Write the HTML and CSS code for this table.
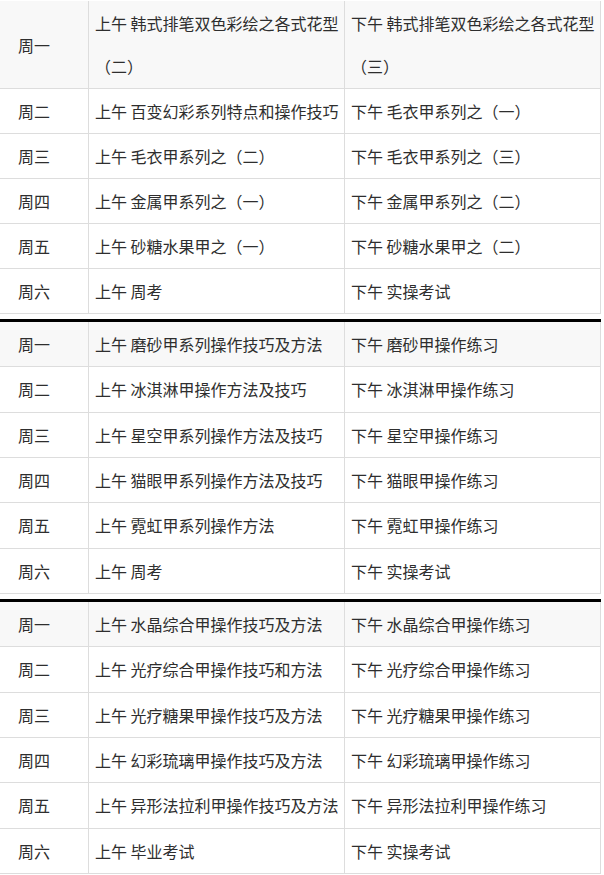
FILE: index.html
```html
<!DOCTYPE html>
<html lang="zh-CN">
<head>
<meta charset="utf-8">
<title>课程安排</title>
<link rel="stylesheet" href="styles.css">
</head>
<body>
<div class="schedule">
  <table class="week">
    <colgroup><col class="c-day"><col class="c-am"><col class="c-pm"></colgroup>
    <tbody>
      <tr class="head"><td class="day">周一</td><td>上午 韩式排笔双色彩绘之各式花型（二）</td><td>下午 韩式排笔双色彩绘之各式花型（三）</td></tr>
      <tr><td class="day">周二</td><td>上午 百变幻彩系列特点和操作技巧</td><td>下午 毛衣甲系列之（一）</td></tr>
      <tr><td class="day">周三</td><td>上午 毛衣甲系列之（二）</td><td>下午 毛衣甲系列之（三）</td></tr>
      <tr><td class="day">周四</td><td>上午 金属甲系列之（一）</td><td>下午 金属甲系列之（二）</td></tr>
      <tr><td class="day">周五</td><td>上午 砂糖水果甲之（一）</td><td>下午 砂糖水果甲之（二）</td></tr>
      <tr><td class="day">周六</td><td>上午 周考</td><td>下午 实操考试</td></tr>
    </tbody>
  </table>
  <table class="week week--ruled">
    <colgroup><col class="c-day"><col class="c-am"><col class="c-pm"></colgroup>
    <tbody>
      <tr class="head"><td class="day">周一</td><td>上午 磨砂甲系列操作技巧及方法</td><td>下午 磨砂甲操作练习</td></tr>
      <tr><td class="day">周二</td><td>上午 冰淇淋甲操作方法及技巧</td><td>下午 冰淇淋甲操作练习</td></tr>
      <tr><td class="day">周三</td><td>上午 星空甲系列操作方法及技巧</td><td>下午 星空甲操作练习</td></tr>
      <tr><td class="day">周四</td><td>上午 猫眼甲系列操作方法及技巧</td><td>下午 猫眼甲操作练习</td></tr>
      <tr><td class="day">周五</td><td>上午 霓虹甲系列操作方法</td><td>下午 霓虹甲操作练习</td></tr>
      <tr><td class="day">周六</td><td>上午 周考</td><td>下午 实操考试</td></tr>
    </tbody>
  </table>
  <table class="week week--ruled">
    <colgroup><col class="c-day"><col class="c-am"><col class="c-pm"></colgroup>
    <tbody>
      <tr class="head"><td class="day">周一</td><td>上午 水晶综合甲操作技巧及方法</td><td>下午 水晶综合甲操作练习</td></tr>
      <tr><td class="day">周二</td><td>上午 光疗综合甲操作技巧和方法</td><td>下午 光疗综合甲操作练习</td></tr>
      <tr><td class="day">周三</td><td>上午 光疗糖果甲操作技巧及方法</td><td>下午 光疗糖果甲操作练习</td></tr>
      <tr><td class="day">周四</td><td>上午 幻彩琉璃甲操作技巧及方法</td><td>下午 幻彩琉璃甲操作练习</td></tr>
      <tr><td class="day">周五</td><td>上午 异形法拉利甲操作技巧及方法</td><td>下午 异形法拉利甲操作练习</td></tr>
      <tr><td class="day">周六</td><td>上午 毕业考试</td><td>下午 实操考试</td></tr>
    </tbody>
  </table>
</div>
</body>
</html>
```

FILE: styles.css
```css
html, body {
  margin: 0;
  padding: 0;
  background: #ffffff;
}

body {
  font-family: "Noto Sans CJK SC", "Noto Sans", sans-serif;
  font-size: 16px;
  color: #2e2e2e;
}

.schedule {
  padding-top: 1px;
}

.week {
  border-collapse: separate;
  border-spacing: 0;
  table-layout: fixed;
  width: 601px;
}

.week--ruled {
  margin-top: 5px;
  border-top: 3px solid #000000;
}

.c-day { width: 89px; }
.c-am  { width: 256px; }
.c-pm  { width: 256px; }

.week td {
  box-sizing: border-box;
  border-right: 1px solid #dddddd;
  border-bottom: 1px solid #dddddd;
  padding: 1px 2px 0 6px;
  line-height: 43px;
  vertical-align: middle;
  text-align: left;
}

.week--ruled td {
  padding-bottom: 0.34px;
}

.week td.day {
  padding-left: 18px;
}

.week .head td {
  background: #f8f8f8;
}
```
